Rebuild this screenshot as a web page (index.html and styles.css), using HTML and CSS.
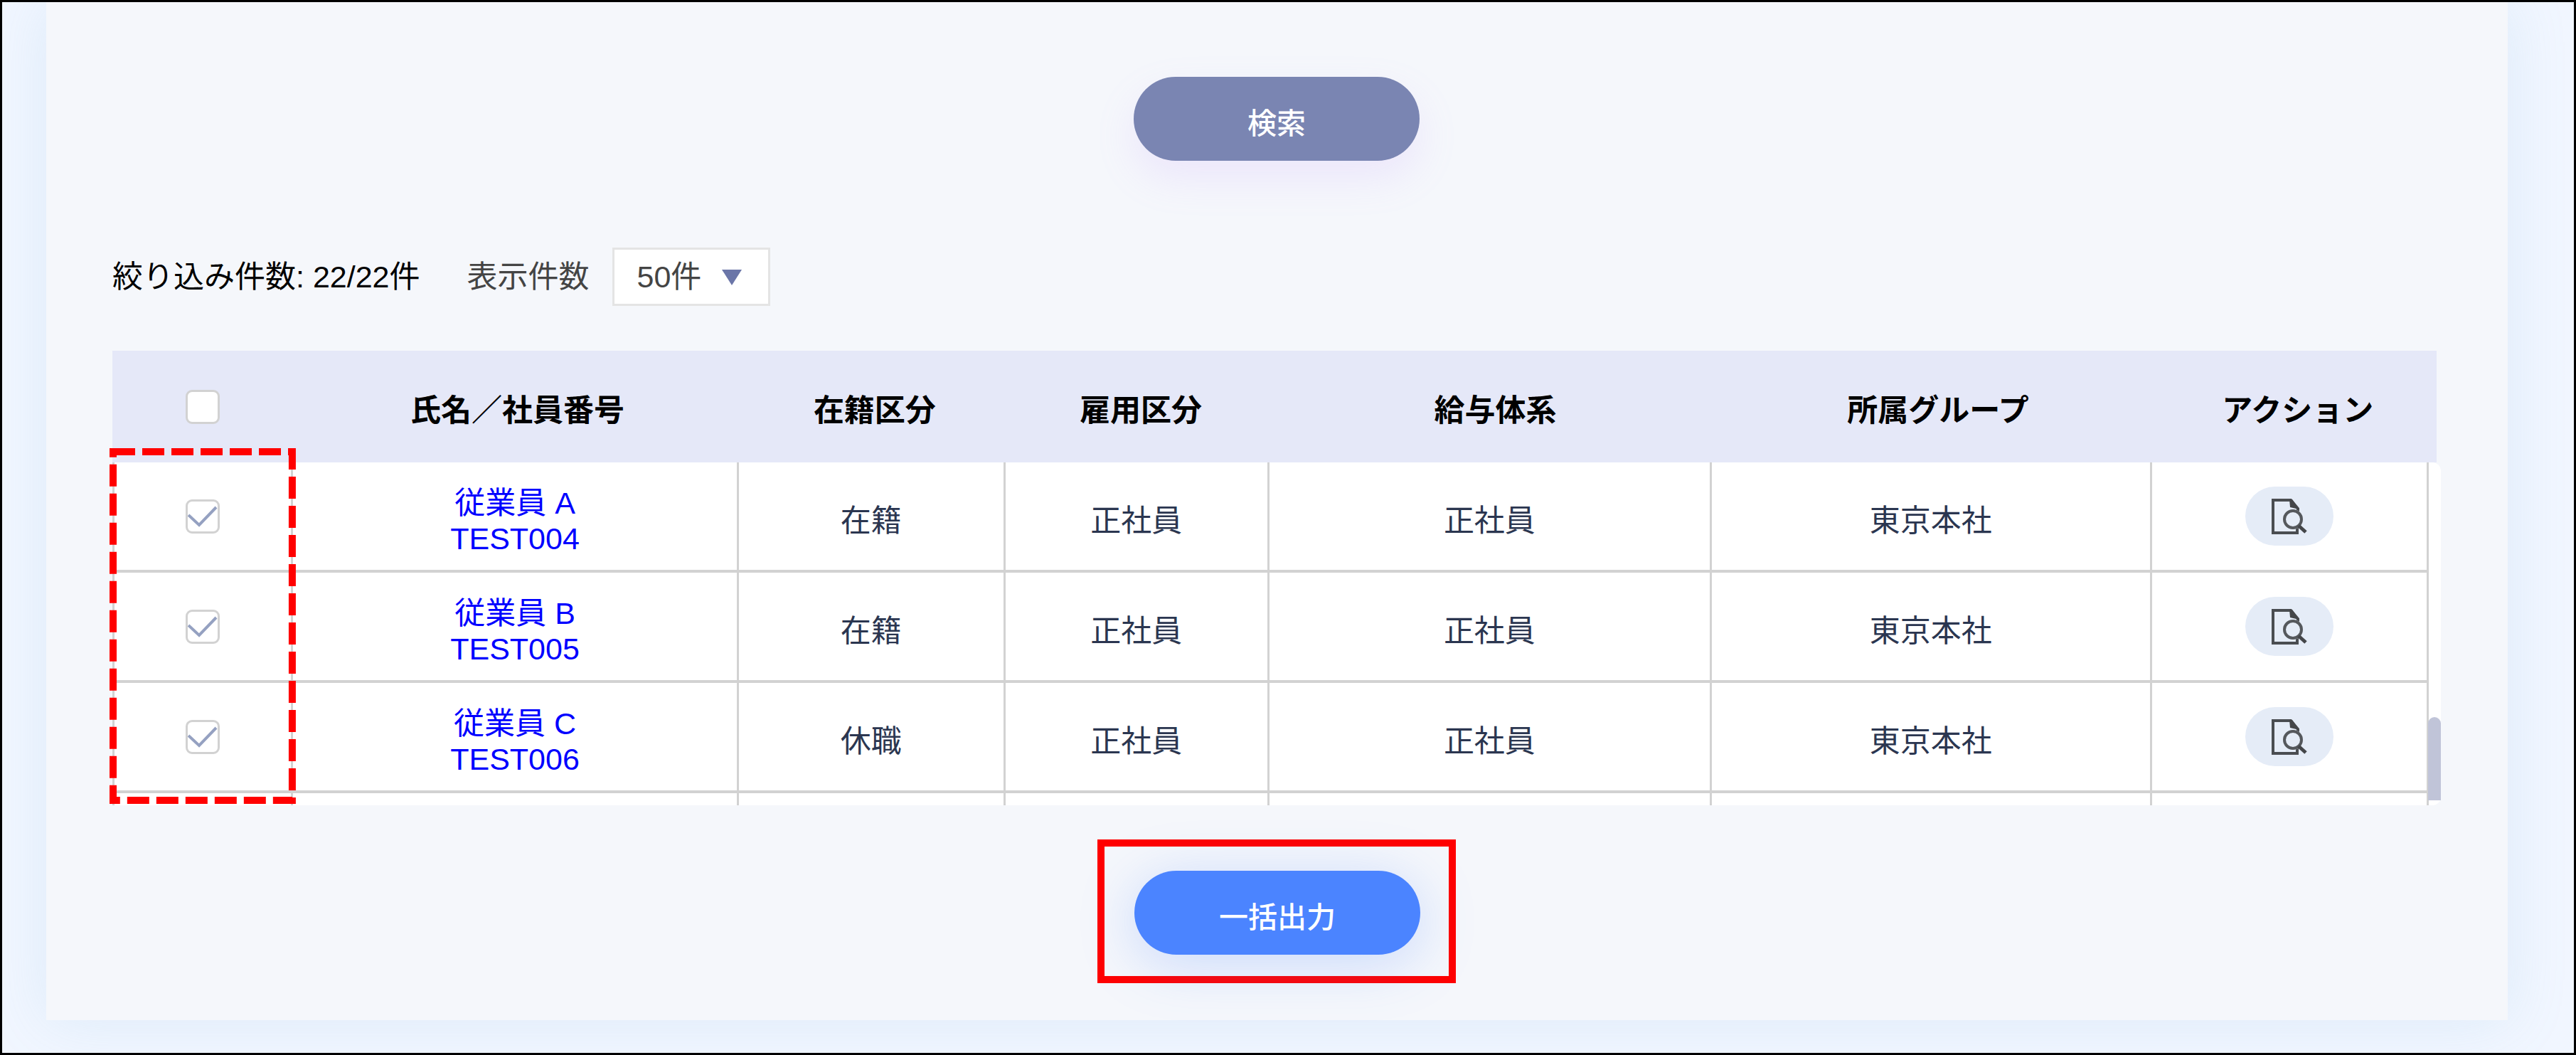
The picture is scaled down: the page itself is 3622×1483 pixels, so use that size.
FILE: index.html
```html
<!DOCTYPE html>
<html lang="ja">
<head>
<meta charset="utf-8">
<meta name="viewport" content="width=device-width, initial-scale=1">
<title>従業員一覧</title>
<link rel="stylesheet" href="styles.css">
</head>
<body>
<svg class="defs" aria-hidden="true">
  <symbol id="detail" viewBox="0 0 52 52">
    <path d="M37 42v7H3V3h25l10 12v5" fill="none" stroke="#4a4d51" stroke-width="4"/>
    <path d="M26 2h4l10 14-13-3z" fill="#444649"/>
    <circle cx="31" cy="30" r="14" fill="#e5ecf7"/>
    <circle cx="31" cy="30" r="12" fill="none" stroke="#55585c" stroke-width="4"/>
    <path d="M39 39l10 9" stroke="#444649" stroke-width="5"/>
  </symbol>
</svg>
<main class="panel">
  <button class="pill search" type="button">検索</button>

  <div class="filter">
    <span class="count">絞り込み件数: 22/22件</span>
    <label class="size-label" for="size">表示件数</label>
    <span class="size">
      <select id="size"><option>50件</option></select>
      <svg class="arrow" viewBox="0 0 28 22" aria-hidden="true"><path d="M0 0h28L14 22z"/></svg>
    </span>
  </div>

  <section class="list">
    <table class="head">
      <colgroup><col class="c-check"><col class="c-name"><col class="c-status"><col class="c-type"><col class="c-pay"><col class="c-group"><col class="c-action"></colgroup>
      <thead>
        <tr>
          <th class="check"><input type="checkbox" aria-label="すべて選択"></th>
          <th>氏名／社員番号</th>
          <th>在籍区分</th>
          <th>雇用区分</th>
          <th>給与体系</th>
          <th>所属グループ</th>
          <th>アクション</th>
        </tr>
      </thead>
    </table>
    <div class="rows">
      <div class="scroller">
        <table class="body">
          <colgroup><col class="c-check"><col class="c-name"><col class="c-status"><col class="c-type"><col class="c-pay"><col class="c-group"><col class="c-action"></colgroup>
          <tbody>
            <tr>
              <td class="check"><input type="checkbox" checked aria-label="従業員 Aを選択"></td>
              <td class="name"><a href="#TEST004">従業員 A<br>TEST004</a></td>
              <td>在籍</td><td>正社員</td><td>正社員</td><td>東京本社</td>
              <td class="action"><button type="button" aria-label="詳細"><svg><use href="#detail"/></svg></button></td>
            </tr>
            <tr>
              <td class="check"><input type="checkbox" checked aria-label="従業員 Bを選択"></td>
              <td class="name"><a href="#TEST005">従業員 B<br>TEST005</a></td>
              <td>在籍</td><td>正社員</td><td>正社員</td><td>東京本社</td>
              <td class="action"><button type="button" aria-label="詳細"><svg><use href="#detail"/></svg></button></td>
            </tr>
            <tr>
              <td class="check"><input type="checkbox" checked aria-label="従業員 Cを選択"></td>
              <td class="name"><a href="#TEST006">従業員 C<br>TEST006</a></td>
              <td>休職</td><td>正社員</td><td>正社員</td><td>東京本社</td>
              <td class="action"><button type="button" aria-label="詳細"><svg><use href="#detail"/></svg></button></td>
            </tr>
            <tr><td></td><td></td><td></td><td></td><td></td><td></td><td></td></tr>
          </tbody>
        </table>
      </div>
      <span class="thumb"></span>
      <svg class="marker" aria-hidden="true"><rect x="5" y="5"/></svg>
    </div>
  </section>

  <div class="callout">
    <button class="pill export" type="button">一括出力</button>
  </div>
</main>
</body>
</html>
```
FILE: styles.css
```css
* {
  box-sizing: border-box;
}

body {
  margin: 0;
  min-height: 100vh;
  padding: 0 93px 46px 62px;
  border: 3px solid #000;
  background: #f1f6ff;
  color: #000;
  font-family: "Liberation Sans", "Noto Sans CJK JP", sans-serif;
  font-size: 43px;
  line-height: 50px;
  overflow-x: hidden;
}

button,
select {
  font-family: inherit;
}

.defs {
  position: absolute;
  width: 0;
  height: 0;
}

.panel {
  display: flex;
  flex-direction: column;
  align-items: center;
  padding: 105px 94px 52px 93px;
  background: #f5f7fb;
  box-shadow: 0 0 80px rgba(120, 180, 220, 0.16);
}

.pill {
  width: 402px;
  height: 118px;
  padding: 6px 0 0;
  border: 0;
  border-radius: 59px;
  color: #fff;
  font-size: 41px;
  font-weight: 500;
}

.search {
  background: #7a85b2;
  box-shadow: 0 24px 56px rgba(190, 140, 255, 0.15);
}

.export {
  background: #4b84ff;
  box-shadow: 0 12px 80px rgba(75, 132, 255, 0.26);
}

.filter {
  display: flex;
  align-items: center;
  align-self: stretch;
  margin: 122px 0 63px;
}

.size-label {
  margin: 0 32px 0 66px;
  color: #444;
}

.size {
  position: relative;
}

.size select {
  display: block;
  width: 222px;
  height: 82px;
  padding: 0 32px;
  border: 3px solid #e4e4e4;
  border-radius: 0;
  appearance: none;
  background: #fff;
  color: #444;
  font-size: 43px;
}

.arrow {
  position: absolute;
  top: 31px;
  right: 40px;
  width: 28px;
  height: 22px;
  fill: #6b76a8;
  pointer-events: none;
}

.list {
  align-self: stretch;
}

table {
  table-layout: fixed;
  border-spacing: 0;
  text-align: center;
}

.c-check { width: 7.8%; }
.c-name { width: 19.25%; }
.c-status { width: 11.5%; }
.c-type { width: 11.4%; }
.c-pay { width: 19.1%; }
.c-group { width: 19%; }
.c-action { width: 11.95%; }

.head {
  width: calc(100% - 6px);
  background: #e5e8f8;
}

th {
  height: 157px;
  padding: 10px 0 0;
  font-weight: 700;
}

.rows {
  position: relative;
}

.scroller {
  height: 482px;
  overflow: hidden;
  border-radius: 0 12px 12px 0;
  background: #fff;
}

.body {
  width: calc(100% - 17px);
}

td {
  height: 155px;
  padding: 12px 0 0;
  border: solid #d2d2d2;
  border-width: 0 3px 4px 0;
  color: #2b3650;
}

td:first-child {
  border-left-width: 3px;
}

.check,
.action {
  padding: 0;
}

.check {
  line-height: 0;
}

a {
  color: #00f;
  text-decoration: none;
}

input[type="checkbox"] {
  width: 48px;
  height: 48px;
  margin: 0;
  border: 3px solid #d2d2d2;
  border-radius: 9px;
  appearance: none;
  background: #fff;
  vertical-align: middle;
}

input[type="checkbox"]:checked {
  background: #fff url("data:image/svg+xml,%3Csvg xmlns='http://www.w3.org/2000/svg' viewBox='0 0 42 42'%3E%3Cpath d='M1 19l15 14L40 8' fill='none' stroke='%2395a1c1' stroke-width='4'/%3E%3C/svg%3E") center / 42px 42px no-repeat;
}

.action button {
  display: grid;
  place-items: center;
  width: 124px;
  height: 83px;
  margin: 0 auto;
  padding: 0;
  border: 0;
  border-radius: 42px;
  background: #e5ecf7;
}

.action svg {
  width: 52px;
  height: 52px;
}

.thumb {
  position: absolute;
  right: 0;
  bottom: 7px;
  width: 18px;
  height: 117px;
  border-radius: 9px 9px 0 0;
  background: #c0c4d8;
}

.marker {
  position: absolute;
  top: -20px;
  left: -4px;
  width: 8%;
  height: 500px;
}

.marker rect {
  width: calc(100% - 10px);
  height: calc(100% - 10px);
  fill: none;
  stroke: #f00;
  stroke-width: 10px;
  stroke-dasharray: 31 10;
}

.callout {
  margin-top: 48px;
  padding: 34px 40px 30px 42px;
  border: 10px solid #f00;
}
```
